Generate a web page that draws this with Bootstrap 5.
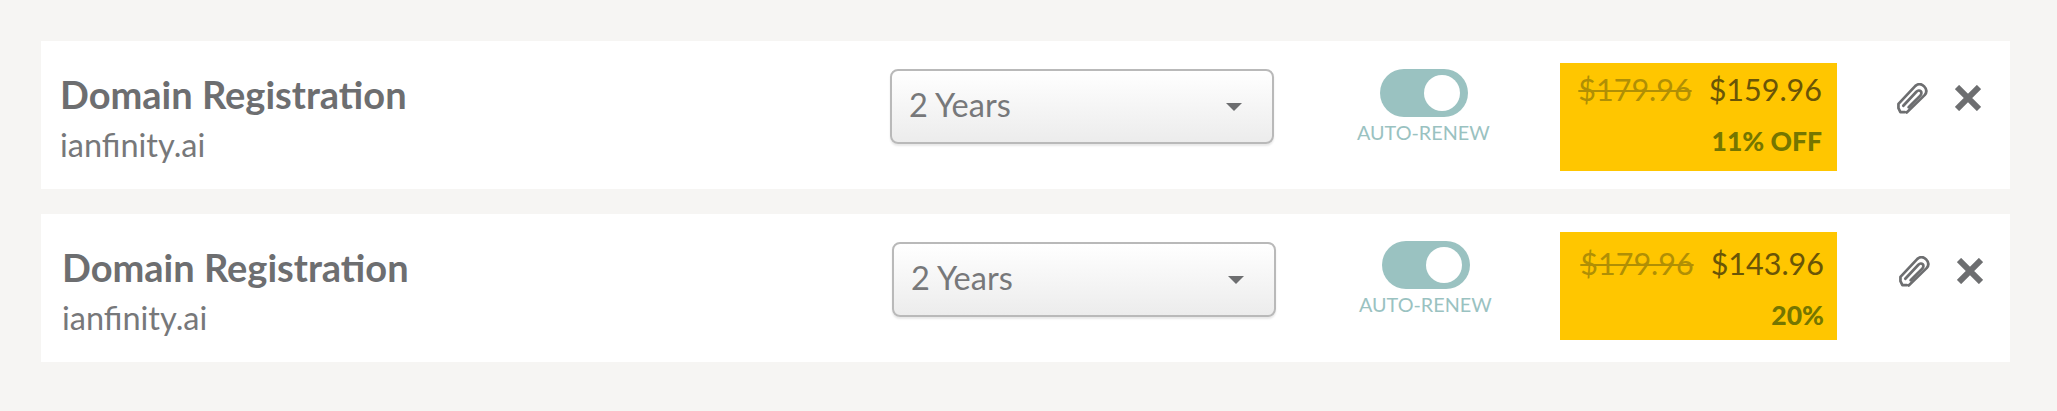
<!DOCTYPE html>
<html lang="en">
<head>
  <meta charset="UTF-8" />
  <title>Cart</title>
  <link href="https://cdn.jsdelivr.net/npm/bootstrap@5.3.3/dist/css/bootstrap.min.css" rel="stylesheet">
  <style>
    body { background: #f6f5f3; font-family: Lato, "Liberation Sans", sans-serif; color: #77787a; padding: 41px 47px 0 41px; }
    .cart-row { background: #fff; height: 148px; margin-bottom: 25px; }
    .cart-name { width: 849px; flex: none; padding-left: 19px; padding-top: 30px; }
    .cart-title { font-size: 38px; font-weight: 700; line-height: 46px; margin: 0; color: #6d6e70; }
    .cart-domain { font-size: 32.5px; font-weight: 400; line-height: 40px; margin-top: 8px; }
    .term-btn { width: 384px; height: 75px; margin-top: 28px; padding: 0 30px 3px 17px; font-size: 32.5px; font-weight: 400; color: #77787a;
      background: linear-gradient(#fff, #ececec); border: 2px solid #b9b9b9; border-radius: 8px; box-shadow: 0 2px 2px #e8e8e8; }
    .term-btn::after { border-top-width: 8px; border-left-width: 8px; border-right-width: 8px; margin: 3px 0 0; color: #6d6e70; }
    .renew-col { width: 286px; flex: none; padding-left: 83px; padding-top: 28px; }
    .renew-pill { width: 88px; height: 48px; margin-left: 23px; background: #9ac2c1; border-radius: 24px; display: flex; align-items: center; justify-content: flex-end; padding-right: 8px; }
    .renew-knob { width: 36px; height: 36px; background: #fff; border-radius: 50%; }
    .renew-label { font-size: 19.8px; font-weight: 400; line-height: 24px; color: #9ac2c1; margin-top: 3px; white-space: nowrap; }
    .price-box { width: 277px; height: 108px; flex: none; margin-top: 22px; background: #ffc600; padding: 6px 15px 0 0; text-align: right; }
    .price-old { font-size: 30.5px; font-weight: 400; color: #b08f05; margin-right: 17px; text-decoration-thickness: 2px; }
    .price-new { font-size: 30.5px; font-weight: 400; color: #6a5507; }
    .price-line { line-height: 40px; }
    .price-off { font-size: 26.5px; font-weight: 900; color: #757600; line-height: 32px; margin-top: 10px; }
    .cart-acts { padding-left: 60px; padding-top: 42px; gap: 27px; }
    .clip-icon { width: 31px; height: 31px; }
    .close-icon { width: 26px; height: 26px; margin-top: 2px; }
    .row-b .cart-name { padding-left: 21px; }
    .row-b .term-btn { margin-left: 2px; margin-right: -2px; }
    .row-b .renew-col { padding-left: 85px; padding-top: 27px; }
    .row-b .price-box { margin-top: 18px; padding-right: 13px; padding-top: 11px; }
    .row-b .cart-acts { padding-left: 62px; padding-top: 42px; }
  </style>
</head>
<body>
  <div class="cart-row d-flex">
    <div class="cart-name">
      <h2 class="cart-title">Domain Registration</h2>
      <div class="cart-domain">ianfinity.ai</div>
    </div>
    <div><button class="term-btn btn dropdown-toggle d-flex align-items-center justify-content-between">2 Years</button></div>
    <div class="renew-col">
      <div class="renew-pill"><div class="renew-knob"></div></div>
      <div class="renew-label">AUTO-RENEW</div>
    </div>
    <div class="price-box">
      <div class="price-line"><s class="price-old">$179.96</s><span class="price-new">$159.96</span></div>
      <div class="price-off">11% OFF</div>
    </div>
    <div class="cart-acts d-flex align-items-start">
      <svg class="clip-icon" viewBox="0 0 32 32" fill="none" stroke="#6d6e70" stroke-width="2.8" stroke-linejoin="round" stroke-linecap="round"><path d="M8 30H3.5L1.5 26V21.5L19 3C22 0.5 25.5 1 28 3.5C31 6.5 31 9.5 28.5 12.5L10 30.5"/><path d="M6.5 23.5L20 9C21.5 7.5 23.5 7.5 24.5 8.5C25.5 9.5 25.5 11.5 24 13L12 25"/></svg>
      <svg class="close-icon" viewBox="0 0 26 26" fill="none" stroke="#6d6e70" stroke-width="6"><path d="M2 2L24 24M24 2L2 24"/></svg>
    </div>
  </div>
  <div class="cart-row row-b d-flex">
    <div class="cart-name">
      <h2 class="cart-title">Domain Registration</h2>
      <div class="cart-domain">ianfinity.ai</div>
    </div>
    <div><button class="term-btn btn dropdown-toggle d-flex align-items-center justify-content-between">2 Years</button></div>
    <div class="renew-col">
      <div class="renew-pill"><div class="renew-knob"></div></div>
      <div class="renew-label">AUTO-RENEW</div>
    </div>
    <div class="price-box">
      <div class="price-line"><s class="price-old">$179.96</s><span class="price-new">$143.96</span></div>
      <div class="price-off">20%</div>
    </div>
    <div class="cart-acts d-flex align-items-start">
      <svg class="clip-icon" viewBox="0 0 32 32" fill="none" stroke="#6d6e70" stroke-width="2.8" stroke-linejoin="round" stroke-linecap="round"><path d="M8 30H3.5L1.5 26V21.5L19 3C22 0.5 25.5 1 28 3.5C31 6.5 31 9.5 28.5 12.5L10 30.5"/><path d="M6.5 23.5L20 9C21.5 7.5 23.5 7.5 24.5 8.5C25.5 9.5 25.5 11.5 24 13L12 25"/></svg>
      <svg class="close-icon" viewBox="0 0 26 26" fill="none" stroke="#6d6e70" stroke-width="6"><path d="M2 2L24 24M24 2L2 24"/></svg>
    </div>
  </div>
  <script src="https://cdn.jsdelivr.net/npm/bootstrap@5.3.3/dist/js/bootstrap.bundle.min.js"></script>
</body>
</html>
